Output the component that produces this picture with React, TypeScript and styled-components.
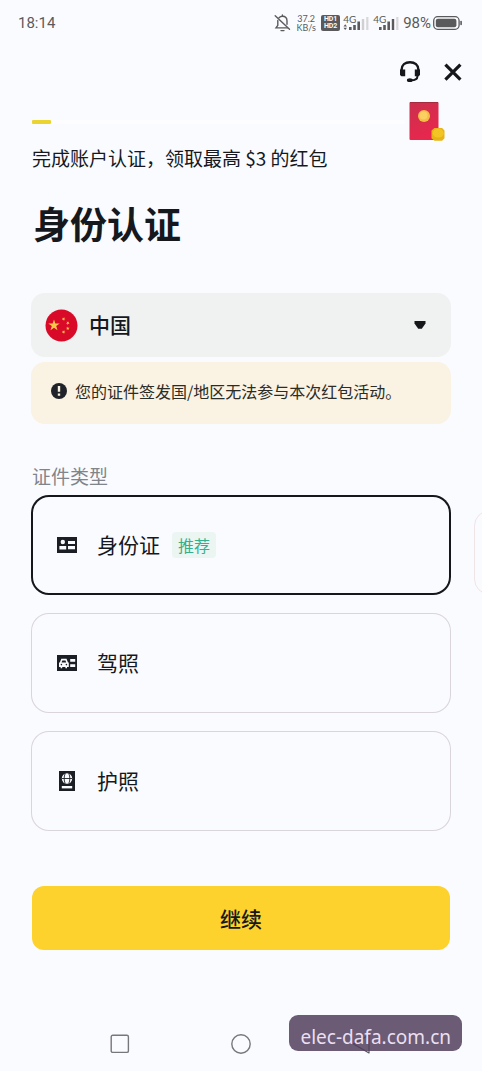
import React, { useState } from "react";
import styled, { createGlobalStyle } from "styled-components";

const GlobalStyle = createGlobalStyle`
  *, *::before, *::after { box-sizing: border-box; }
  body {
    margin: 0;
    background: #fafbff;
    color: #15191e;
    font-family: "Noto Sans CJK SC", "Noto Sans", sans-serif;
  }
  button, select { font: inherit; color: inherit; }
`;

const Page = styled.div`
  position: relative;
  display: flex;
  flex-direction: column;
  min-height: 100vh;
  overflow: hidden;
`;

const StatusBar = styled.header`
  display: flex;
  align-items: center;
  justify-content: space-between;
  height: 46px;
  padding: 0 20px 0 18px;
  color: #5a5a5c;
  font-family: Roboto, sans-serif;
  font-size: 15px;
  line-height: 20px;
`;

const StatusItems = styled.div`
  display: flex;
  align-items: center;
`;

const NetSpeed = styled.span`
  display: flex;
  flex-direction: column;
  align-items: center;
  width: 20px;
  margin: 0 5px;
  font-family: Lato, sans-serif;
  font-size: 9px;
  line-height: 9px;
`;

const VoiceBadge = styled.span`
  display: flex;
  flex-direction: column;
  align-items: center;
  justify-content: center;
  width: 19px;
  height: 16px;
  margin-right: 3px;
  border-radius: 2px;
  background: #5a5a5c;
  color: #fafbff;
  font-family: Roboto, sans-serif;
  font-size: 7px;
  font-weight: 700;
  line-height: 7px;
`;

const SignalBox = styled.span`
  display: grid;
  width: 26px;
  height: 16px;
  margin-right: 4px;
  font-family: Lato, sans-serif;
  font-size: 10px;
  line-height: 8px;

  > * { grid-area: 1 / 1; }
`;

const BatteryText = styled.span`
  margin-right: 2px;
`;

const ActionBar = styled.div`
  display: flex;
  justify-content: flex-end;
  align-items: center;
  gap: 21px;
  height: 52px;
  padding: 0 18px;
`;

const IconButton = styled.button`
  display: flex;
  padding: 0;
  border: 0;
  background: none;
  cursor: pointer;
`;

const Content = styled.main`
  display: flex;
  flex-direction: column;
  padding: 2px 31px 0;
`;

const ProgressRow = styled.div`
  display: flex;
  align-items: center;
  gap: 4px;
  height: 44px;
  padding: 0 6px 0 1px;
`;

const Track = styled.div`
  flex: 1;
  height: 4px;
  border-radius: 2px;
  background: #fdfdff;
`;

const Progress = styled.div`
  width: 19px;
  height: 4px;
  border-radius: 1px;
  background: #ebd42f;
`;

const Promo = styled.p`
  margin: 0 0 0 1px;
  font-size: 19px;
  line-height: 28px;
`;

const Title = styled.h1`
  margin: 24px 0 43px 2px;
  font-size: 37px;
  font-weight: 700;
  line-height: 54px;
`;

const CountryField = styled.div`
  display: grid;
  align-items: center;
  height: 64px;
  border-radius: 14px;
  background: #f0f1f1;

  > * { grid-area: 1 / 1; }
  > svg { pointer-events: none; }
`;

const CountrySelect = styled.select`
  width: 100%;
  height: 100%;
  padding: 0 48px 2px 58px;
  border: 0;
  border-radius: 14px;
  appearance: none;
  background: transparent;
  font-size: 21px;
  font-weight: 500;
`;

const Flag = styled.svg`
  margin-left: 14px;
`;

const Caret = styled.svg`
  justify-self: end;
  margin-right: 25px;
`;

const Notice = styled.p`
  display: flex;
  align-items: center;
  gap: 8px;
  min-height: 62px;
  margin: 5px 0 0;
  padding: 0 20px 4px;
  border-radius: 14px;
  background: #faf2e2;
  color: #2b2c25;
  font-size: 16px;
  line-height: 24px;

  svg { flex: none; }
`;

const DocumentTypes = styled.fieldset`
  display: flex;
  flex-direction: column;
  gap: 18px;
  min-width: 0;
  margin: 38px 0 0;
  padding: 0;
  border: 0;
`;

const Legend = styled.legend`
  margin-bottom: 5px;
  padding: 0 1px;
  color: #80858b;
  font-size: 19px;
  line-height: 28px;
`;

const Slide = styled.div`
  display: flex;
  align-items: flex-end;
  gap: 23px;
`;

const NextSlide = styled.div`
  flex: 0 0 100%;
  height: 85px;
  border: 1px solid #f0e4e6;
  border-radius: 16px;
`;

const Option = styled.label<{ $selected: boolean }>`
  display: flex;
  flex: 0 0 100%;
  align-items: center;
  height: 100px;
  padding: 0 24px;
  border-radius: 18px;
  box-shadow: inset 0 0 0 ${(p) => (p.$selected ? "2px #15171a" : "1px #d9d5d8")};
  font-size: 21px;
  line-height: 32px;
  cursor: pointer;

  svg { flex: none; margin-right: 18px; }
`;

const OptionText = styled.span`
  padding-bottom: 2px;
`;

const Radio = styled.input`
  width: 0;
  height: 0;
  margin: 0;
  appearance: none;
`;

const Tag = styled.span`
  margin-left: 12px;
  padding: 0 6px;
  border-radius: 4px;
  background: #ebf6f3;
  color: #35b08c;
  font-size: 16px;
  line-height: 26px;
`;

const ContinueButton = styled.button`
  height: 64px;
  margin: 55px 1px 0;
  padding-bottom: 2px;
  border: 0;
  border-radius: 12px;
  background: #fed22d;
  font-size: 21px;
  font-weight: 500;
  cursor: pointer;
`;

const SystemNav = styled.nav`
  display: grid;
  grid-template-columns: repeat(3, 1fr);
  justify-items: center;
  align-items: center;
  height: 54px;
  margin-top: auto;
  padding: 0 60px;
`;

const Watermark = styled.div`
  position: absolute;
  right: 20px;
  bottom: 20px;
  height: 36px;
  padding: 4px 11px 0;
  border-radius: 9px;
  background: rgba(81, 62, 93, 0.85);
  color: #ecdff0;
  font-family: "Noto Sans", sans-serif;
  font-size: 19px;
  line-height: 36px;
  pointer-events: none;
`;

const BellOffIcon = () => (
  <svg width="17" height="18" viewBox="0 0 17 18" fill="none" stroke="#5a5a5c" strokeWidth="1.4" strokeLinecap="round">
    <path d="M5 3.8C6 2.7 7.1 2.2 8.4 2.2c2.8 0 4.6 2.1 4.6 4.8v3.2M13.4 13.9H2l1.8-2.6V6.5" />
    <path d="M1.2 1.8l14.3 13.4M8.4 1v1M7 16.6h3" />
  </svg>
);

const Signal = ({ strong }: { strong: boolean }) => (
  <SignalBox>
    <span>4G</span>
    <svg width="26" height="16" viewBox="0 0 26 16" fill="#5a5a5c">
      {!strong && <path d="M0.5 11.4L2.2 9.2 4 11.4zM0.5 12.8l1.7 2.2L4 12.8z" />}
      <rect x="6" y="12" width="2.6" height="3" />
      <rect x="10.2" y="10" width="2.6" height="5" />
      <rect x="14.4" y="6.5" width="2.6" height="8.5" />
      <rect x="18.8" y="4" width="2.4" height="11" fill={strong ? "#5a5a5c" : "#d0d0d2"} />
      <rect x="23.2" y="2" width="2.2" height="13" fill="#d8d8da" />
    </svg>
  </SignalBox>
);

const BatteryIcon = () => (
  <svg width="29" height="14" viewBox="0 0 29 14">
    <rect x="0.7" y="0.7" width="25.4" height="12.6" rx="4" fill="none" stroke="#5a5a5c" strokeWidth="1.3" />
    <rect x="2.8" y="2.8" width="20.6" height="8.4" rx="2" fill="#5a5a5c" />
    <rect x="27.3" y="4.8" width="1.6" height="4.4" rx="0.8" fill="#5a5a5c" />
  </svg>
);

const HeadsetIcon = () => (
  <svg width="22" height="24" viewBox="0 0 22 24">
    <path d="M2.6 11V9.8C2.6 5 6.2 2.2 11 2.2s8.4 2.8 8.4 7.6V11" fill="none" stroke="#15171a" strokeWidth="2.4" />
    <path d="M1 9.5h5.2v6.7H2.4L1 15zM15.8 9.5H21V15l-1.4 1.2h-3.8z" fill="#15171a" />
    <path d="M18.4 15v1.4c0 2.4-2.2 3.8-6.4 3.8" fill="none" stroke="#15171a" strokeWidth="2" />
    <ellipse cx="10.8" cy="20.2" rx="2.9" ry="1.9" fill="#15171a" />
  </svg>
);

const CloseIcon = () => (
  <svg width="22" height="22" viewBox="0 0 22 22">
    <path d="M3.4 3.6l15 15M18.4 3.6l-15 15" fill="none" stroke="#15171a" strokeWidth="3.2" />
  </svg>
);

const RedPacketIcon = () => (
  <svg width="36" height="42" viewBox="0 0 36 42">
    <defs>
      <linearGradient id="packet" x1="0" y1="0" x2="0.4" y2="1">
        <stop offset="0" stopColor="#c9304e" />
        <stop offset="1" stopColor="#e8274d" />
      </linearGradient>
    </defs>
    <rect x="0.5" y="1" width="29" height="38" rx="1" fill="url(#packet)" />
    <path d="M1 1.5h28" stroke="#a82a3e" />
    <circle cx="15" cy="15" r="6" fill="#f5bd45" />
    <circle cx="14.5" cy="14.5" r="4" fill="#fbcf61" />
    <path d="M25.5 27h7.6l2.4 2.6v7.6l-2.4 2.6h-7.6l-3-2.6v-7.6z" fill="#e7b416" />
    <ellipse cx="29.2" cy="32.2" rx="5.4" ry="4.4" fill="#f3c524" />
  </svg>
);

const STAR = "M0-1L.225-.309H.951L.363.118.588.809 0 .382-.588.809-.363.118-.951-.309H-.225z";

const ChinaFlag = () => (
  <Flag width="33" height="33" viewBox="0 0 33 33" aria-hidden="true">
    <circle cx="16.5" cy="16.5" r="16" fill="#d80a27" />
    <g fill="#f7c64c">
      <path d={STAR} transform="translate(9 16.4) scale(6)" />
      <path d={STAR} transform="translate(18.6 10) rotate(20) scale(2)" />
      <path d={STAR} transform="translate(22.8 14) rotate(40) scale(2)" />
      <path d={STAR} transform="translate(22.8 19.4) scale(2)" />
      <path d={STAR} transform="translate(18.6 23) rotate(20) scale(2)" />
    </g>
  </Flag>
);

const AlertIcon = () => (
  <svg width="16" height="16" viewBox="0 0 16 16">
    <circle cx="8" cy="8" r="8" fill="#202329" />
    <path d="M6.8 3h2.4v5.8H6.8zM6.8 10.4h2.4v2.3H6.8z" fill="#faf2e2" />
  </svg>
);

const IdCardIcon = () => (
  <svg width="24" height="24" viewBox="0 0 24 24">
    <path d="M2 4h20v16H2z" fill="#1b1f25" />
    <circle cx="7.8" cy="9" r="2.2" fill="#fafbff" />
    <path d="M4.4 12.9h6.8v3.5H4.4zM13 7.9h7v3h-7zM13 13h7v3.2h-7z" fill="#fafbff" />
  </svg>
);

const LicenseIcon = () => (
  <svg width="24" height="24" viewBox="0 0 24 24">
    <path d="M2 4h20v16H2z" fill="#1b1f25" />
    <path d="M4 11.6h.8l1.5-3.8h5.2l1.5 3.8h.8v4.4h-1.8v1.2h-1.6V16H7.2v1.2H5.6V16H4z" fill="#fafbff" />
    <path d="M7.3 9.4h3.2l.7 2H6.6z" fill="#1b1f25" />
    <circle cx="6.4" cy="13.6" r="0.8" fill="#1b1f25" />
    <circle cx="11.4" cy="13.6" r="0.8" fill="#1b1f25" />
    <path d="M15.2 8h5v2.8h-5zM15.2 13.2h5V16h-5z" fill="#fafbff" />
  </svg>
);

const PassportIcon = () => (
  <svg width="24" height="24" viewBox="0 0 24 24">
    <path d="M4 2h16v20H4z" fill="#1b1f25" />
    <circle cx="12" cy="9.5" r="5.2" fill="#fafbff" />
    <path d="M6.8 9.5h10.4M10.2 4.5c-1.4 3.2-1.4 6.8 0 10M13.8 4.5c1.4 3.2 1.4 6.8 0 10" fill="none" stroke="#1b1f25" strokeWidth="0.9" />
    <path d="M6.8 17h10.4v2.4H6.8z" fill="#fafbff" />
  </svg>
);

type DocumentOption = {
  id: string;
  label: string;
  icon: React.ReactNode;
  tag?: string;
};

const documents: DocumentOption[] = [
  { id: "id-card", label: "身份证", icon: <IdCardIcon />, tag: "推荐" },
  { id: "license", label: "驾照", icon: <LicenseIcon /> },
  { id: "passport", label: "护照", icon: <PassportIcon /> },
];

export default function App() {
  const [selected, setSelected] = useState("id-card");

  return (
    <Page>
      <GlobalStyle />
      <StatusBar>
        <span>18:14</span>
        <StatusItems>
          <BellOffIcon />
          <NetSpeed>
            <span>37.2</span>
            <span>KB/s</span>
          </NetSpeed>
          <VoiceBadge>
            <span>HD1</span>
            <span>HD2</span>
          </VoiceBadge>
          <Signal strong={false} />
          <Signal strong />
          <BatteryText>98%</BatteryText>
          <BatteryIcon />
        </StatusItems>
      </StatusBar>

      <ActionBar>
        <IconButton type="button" aria-label="客服">
          <HeadsetIcon />
        </IconButton>
        <IconButton type="button" aria-label="关闭">
          <CloseIcon />
        </IconButton>
      </ActionBar>

      <Content>
        <ProgressRow>
          <Track>
            <Progress />
          </Track>
          <RedPacketIcon />
        </ProgressRow>
        <Promo>完成账户认证，领取最高 $3 的红包</Promo>
        <Title>身份认证</Title>

        <CountryField>
          <ChinaFlag />
          <CountrySelect aria-label="签发国家/地区" defaultValue="CN">
            <option value="CN">中国</option>
          </CountrySelect>
          <Caret width="12" height="10" viewBox="0 0 12 10" aria-hidden="true">
            <path d="M0.5 1h11v2.5L7.8 8.8H4.2L0.5 3.5z" fill="#15171a" />
          </Caret>
        </CountryField>
        <Notice>
          <AlertIcon />
          <span>您的证件签发国/地区无法参与本次红包活动。</span>
        </Notice>

        <DocumentTypes>
          <Legend>证件类型</Legend>
          {documents.map((doc) => (
            <Slide key={doc.id}>
              <Option $selected={selected === doc.id}>
                <Radio
                  type="radio"
                  name="document"
                  value={doc.id}
                  checked={selected === doc.id}
                  onChange={() => setSelected(doc.id)}
                />
                {doc.icon}
                <OptionText>{doc.label}</OptionText>
                {doc.tag && <Tag>{doc.tag}</Tag>}
              </Option>
              {doc.tag && <NextSlide />}
            </Slide>
          ))}
        </DocumentTypes>

        <ContinueButton type="button">继续</ContinueButton>
      </Content>

      <SystemNav>
        <IconButton type="button" aria-label="最近任务">
          <svg width="20" height="20" viewBox="0 0 20 20" fill="none" stroke="#77777a" strokeWidth="1.4">
            <rect x="1.2" y="1.2" width="17.2" height="17.2" rx="1.5" />
          </svg>
        </IconButton>
        <IconButton type="button" aria-label="主屏幕">
          <svg width="20" height="20" viewBox="0 0 20 20" fill="none" stroke="#77777a" strokeWidth="1.4">
            <circle cx="10" cy="10" r="9.2" />
          </svg>
        </IconButton>
        <IconButton type="button" aria-label="返回">
          <svg width="20" height="20" viewBox="0 0 20 20" fill="none" stroke="#55555a" strokeWidth="1.2" strokeLinejoin="round">
            <path d="M1.5 10L17 1v18z" />
          </svg>
        </IconButton>
      </SystemNav>
      <Watermark>elec-dafa.com.cn</Watermark>
    </Page>
  );
}
